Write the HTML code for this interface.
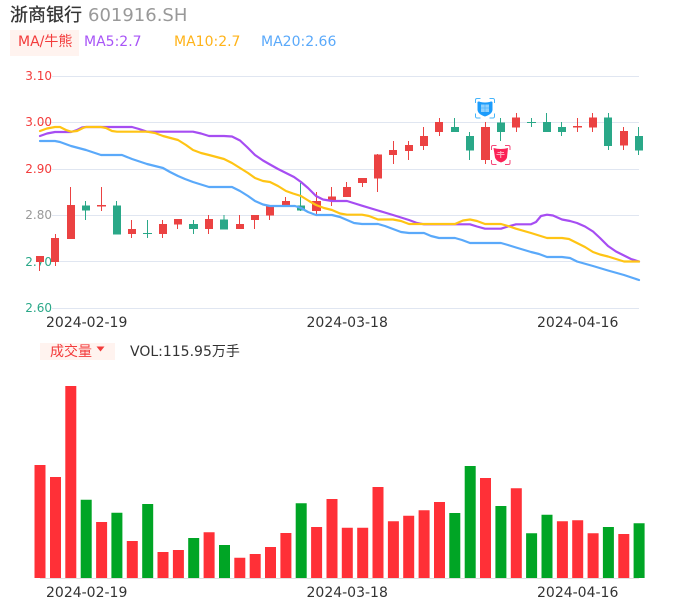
<!DOCTYPE html>
<html>
<head>
<meta charset="utf-8">
<style>
html,body{margin:0;padding:0;background:#fff;width:686px;height:606px;overflow:hidden}
svg{display:block}
text{font-family:"DejaVu Sans","Noto Sans CJK SC",sans-serif}
.cjk{font-family:"Noto Sans CJK SC","DejaVu Sans",sans-serif}
</style>
</head>
<body>
<svg width="686" height="606" viewBox="0 0 686 606" xmlns="http://www.w3.org/2000/svg">
<defs><filter id="b" x="-20%" y="-20%" width="140%" height="140%"><feGaussianBlur stdDeviation="0.35"/></filter></defs>
<text class="cjk" x="10" y="21" font-size="18" fill="#333" stroke="#333" stroke-width="0.25">浙商银行</text>
<text x="88" y="21" font-size="18" fill="#999">601916.SH</text>
<rect x="10" y="30" width="69" height="26" fill="#fff3ef"/>
<text x="18" y="46" font-size="14" fill="#f33b3b">MA/<tspan class="cjk">牛熊</tspan></text>
<text x="84" y="46" font-size="14" fill="#a855f7">MA5:2.7</text>
<text x="174" y="46" font-size="14" fill="#ffb319">MA10:2.7</text>
<text x="261" y="46" font-size="14" fill="#5aa9fa">MA20:2.66</text>

<path d="M52 76.5H639M40 122.5H639M52 169.5H639M52 215.5H639M52 261.5H639M52 308.5H639" stroke="#e0e6f1" stroke-width="1" fill="none"/>
<g font-size="12" text-anchor="end">
<text x="52" y="80" fill="#f33b3b">3.10</text>
<text x="52" y="126" fill="#f33b3b">3.00</text>
<text x="52" y="173" fill="#f33b3b">2.90</text>
<text x="52" y="219" fill="#999">2.80</text>
<text x="52" y="266" fill="#2aa888">2.70</text>
<text x="52" y="312" fill="#2aa888">2.60</text>
</g>

<path stroke="#eb4242" stroke-width="1" fill="none" d="M39.5 256V271M55.5 234V266M70.5 187V239M101.5 187V211M131.5 220V238M162.5 220V238M177.5 219V229M208.5 215V234M239.5 215V229M254.5 215V229M269.5 206V220M285.5 197V205M316.5 192V214M331.5 187V206M346.5 182V197M362.5 178V187M377.5 154V192M393.5 141V164M408.5 141V160M423.5 127V150M439.5 118V136M485.5 122V164M516.5 113V132M577.5 118V132M592.5 113V132M623.5 127V150"/>
<path fill="#eb4242" d="M36 256h8v6h-8zM51 238h8v24h-8zM67 205h8v34h-8zM97 205h9v1.5h-9zM128 229h8v5h-8zM159 224h8v10h-8zM174 219h8v5.500h-8zM205 219h8v10h-8zM236 224h8v5h-8zM251 215h8v5h-8zM266 206h8v9.500h-8zM282 201h8v4h-8zM312 201h9v10h-9zM328 196.500h8v4.500h-8zM343 187h8v10h-8zM358 178h9v5h-9zM374 154.500h8v24h-8zM389 150h8v5h-8zM405 145h8v6h-8zM420 136h8v10h-8zM435 122h8v10h-8zM481 127h9v33h-9zM512 117.500h8v10h-8zM573 126h9v1.500h-9zM589 117.500h8v10h-8zM620 131h8v14.500h-8z"/>
<path stroke="#2aa888" stroke-width="1" fill="none" d="M85.500 201V220M116.500 201V234M147.500 220V238M193.500 220V234M224 215V229M300.500 183V211M454.500 118V132M469.500 132V160M500.500 118V141M531.500 118V127M546.500 113V132M561.500 122V136M608.500 113V150M638.500 127V155"/>
<path fill="#2aa888" d="M82 205.500h8v5h-8zM113 205.500h8v29h-8zM143 233h9v1h-9zM189 224h9v5h-9zM220 219.500h8v10h-8zM297 205.500h8v5h-8zM451 127h8v5h-8zM466 136h8v14.500h-8zM497 122.500h8v9.500h-8zM527 122h9v1h-9zM543 122h8v10h-8zM558 127h8v5h-8zM604 117.500h8v28.500h-8zM635 136h8v14.500h-8z"/>

<g fill="none" stroke-width="2.200" stroke-linejoin="round" stroke-linecap="round">
<polyline stroke="#a64df2" points="40,136 47,133.500 55,132 71,132 77,130 82,127.500 86,127 101,127 117,127 132,127 139,129 147,131.700 163,131.700 178,131.700 193,131.700 201,133.500 209,136 224,136 232,136.500 240,140.500 247,147 255,155 263,160.500 270,164.500 278,169 286,173 294,177 301,182 308,188 316,196 323,199.500 332,201 347,201 355,203.500 362,205.700 378,210.500 393,215 409,220 417,223 424,224.300 439,224.300 455,224.300 470,224.300 477,226.500 485,228.700 501,228.700 508,226.500 516,224.300 531,224.300 536,222 541,216 547,214.700 553,215.500 562,219.500 570,221 577,223 585,226.500 593,231.500 600,238 608,246 616,251.500 624,255.500 631,259 639,261.500"/>
<polyline stroke="#ffc414" points="40,131 47,128.500 55,127 60,127 66,130 71,131.700 77,131 83,128 86,127 101,127 106,128 112,131 117,131.700 132,131.700 147,131.700 155,133 163,136 178,140 186,145 193,150 201,153 209,155 224,159 232,163 240,168 248,173 255,178 263,181 270,182 278,186 286,191 293,193.500 301,196 309,201 316,205 324,208 332,210 340,213.500 347,214.700 362,214.700 369,216 378,219.500 393,219.500 401,221 409,224 424,224 439,224 455,224 463,220.500 470,219.500 477,221 485,224 501,224 508,226 516,228.700 531,233 539,235.500 547,238 562,238 569,239 577,243 585,247 593,252 600,254.500 608,256.500 616,259 624,261.500 639,261.500"/>
<polyline stroke="#5aa9fa" points="40,141 55,141 60,142 71,146 86,150 95,153 101,155 117,155 122,155 132,159 147,164 163,168 170,172 178,176 185,179 193,182 209,187 224,187 232,187 240,191 248,196 255,201 263,204.500 270,206 286,206 295,206 301,208 308,212 316,215 332,215 340,217 347,220 354,223 362,224 378,224 385,226 393,229 401,232 409,233 424,233 431,236 439,238 455,238 462,240 470,243 485,243 501,243 508,245 516,247.500 531,252 539,254 547,257 562,257 570,258 577,261.500 593,266 608,270.500 624,275 639,280"/>
</g>

<g>
<path d="M475.500 103v-3a1.500 1.500 0 0 1 1.500-1.500h3.500M489.500 98.500h3.500a1.500 1.500 0 0 1 1.500 1.500v3M475.500 113.500v3a1.500 1.500 0 0 0 1.500 1.500h3.500M489.500 118h3.500a1.500 1.500 0 0 0 1.500-1.500v-3" fill="none" stroke="#45b4fb" stroke-width="1"/>
<path d="M477.500 102q1-1 3 0q4.500 1 9 0q2-1 3 0v7.500q0 4.500-7.500 7q-7.500-2.500-7.500-7z" fill="#1a9cfb" filter="url(#b)"/>
<rect x="481" y="104.500" width="8" height="7.500" fill="#8fd0fd" filter="url(#b)"/>
<path d="M485 104.500v7.500M481 108h8" stroke="#4fb2fb" stroke-width="0.800" fill="none"/>
<path d="M491.500 150v-3a1.500 1.500 0 0 1 1.500-1.500h3.500M505 145.500h3.500a1.500 1.500 0 0 1 1.500 1.500v3M491.500 160v3a1.500 1.500 0 0 0 1.500 1.500h3.500M505 164.500h3.500a1.500 1.500 0 0 0 1.500-1.500v-3" fill="none" stroke="#f5487a" stroke-width="1"/>
<path d="M493.500 148q7 2 14.500 0l-1 9.500q-1 3.500-6 5q-5-1.500-6-5z" fill="#fb2457" filter="url(#b)"/>
<path d="M496.500 154.500h8M500.700 151v7M497.500 152.500h6.500" stroke="#ffa9bd" stroke-width="1.100" fill="none"/>
</g>

<text x="46" y="327" font-size="14" fill="#333">2024-02-19</text>
<text x="306.500" y="327" font-size="14" fill="#333">2024-03-18</text>
<text x="537" y="327" font-size="14" fill="#333">2024-04-16</text>

<rect x="40" y="343" width="75" height="17" fill="#fff3ef"/>
<text class="cjk" x="50" y="356" font-size="14" fill="#f33b3b">成交量</text>
<path d="M96.500 346.500h8l-4 5z" fill="#f33b3b"/>
<text x="130" y="356" font-size="14" fill="#333">VOL:115.95<tspan class="cjk">万手</tspan></text>

<path d="M40 578.500H639" stroke="#e0e0e0" stroke-width="1"/>
<path fill="#ff3037" d="M34.500 465h11v113h-11zM50 477h11v101h-11zM65.300 386h11v192h-11zM96.100 522h11v56h-11zM126.800 541h11v37h-11zM157.500 552h11v26h-11zM172.900 550h11v28h-11zM203.600 532.300h11v45.700h-11zM234.300 557.700h11v20.300h-11zM249.700 554h11v24h-11zM265 547h11v31h-11zM280.400 533h11v45h-11zM311.100 527h11v51h-11zM326.500 499h11v79h-11zM341.800 527.700h11v50.300h-11zM357.200 527.700h11v50.300h-11zM372.500 487h11v91h-11zM387.900 521.300h11v56.700h-11zM403.200 515.700h11v62.300h-11zM418.600 510.300h11v67.700h-11zM434 502h11v76h-11zM480 478h11v100h-11zM510.800 488.300h11v89.700h-11zM556.900 521.300h11v56.700h-11zM572.200 520.300h11v57.700h-11zM587.600 533.300h11v44.700h-11zM618.300 534h11v44h-11z"/>
<path fill="#00a525" d="M80.700 499.700h11v78.300h-11zM111.400 512.700h11v65.300h-11zM142.200 504h11v74h-11zM188.200 538h11v40h-11zM219 545h11v33h-11zM295.700 503.300h11v74.700h-11zM449.300 513h11v65h-11zM464.700 466h11v112h-11zM495.400 506h11v72h-11zM526.100 533.300h11v44.700h-11zM541.500 514.700h11v63.300h-11zM602.900 527h11v51h-11zM633.600 523.300h11v54.700h-11z"/>

<text x="46" y="597" font-size="14" fill="#333">2024-02-19</text>
<text x="306.500" y="597" font-size="14" fill="#333">2024-03-18</text>
<text x="537" y="597" font-size="14" fill="#333">2024-04-16</text>
</svg>
</body>
</html>
